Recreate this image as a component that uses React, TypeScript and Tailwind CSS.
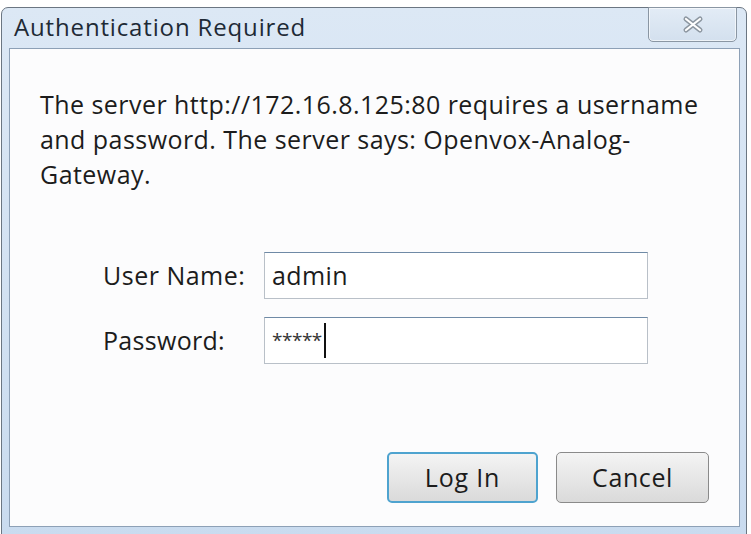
import React from "react";

const font = { fontFamily: '"Open Sans", "Noto Sans", sans-serif' };

export default function App() {
  return (
    <div className="w-[751px] h-[534px] overflow-hidden bg-white pt-[7px] pl-[1px]" style={font}>
      <div className="w-[746px] h-[540px] rounded-t-[7px] border border-[#6b7682] bg-gradient-to-b from-[#dce8f5] to-[#c9dbef] flex flex-col">
        <div className="h-[40px] flex items-start justify-between pl-[12px] pr-[9px] shrink-0">
          <span className="mt-[5px] text-[24px] leading-[28px] text-[#1e2a36] tracking-[0.85px]">Authentication Required</span>
          <div className="w-[89px] h-[35px] -mt-px rounded-b-[5px] border border-[#8a96a3] bg-gradient-to-b from-[#e3ecf6] to-[#d3e0ee] flex items-center justify-center shadow-[inset_0_0_0_1px_rgba(255,255,255,0.6)]">
            <svg width="24" height="19" viewBox="0 0 24 19">
              <path d="M5 4 L19 15 M19 4 L5 15" stroke="#8c96a0" strokeWidth="5" strokeLinecap="round" />
              <path d="M5 4 L19 15 M19 4 L5 15" stroke="#ffffff" strokeWidth="2.2" strokeLinecap="round" />
            </svg>
          </div>
        </div>
        <div className="mx-[7px] mr-[6px] h-[479px] shrink-0 border border-[#8da0b6] bg-[#fcfcfd] flex flex-col pl-[30px] pr-[20px] pt-[38px]">
          <p className="text-[25px] leading-[35px] text-[#1c1c1c] tracking-[0.45px] whitespace-nowrap">
            The server http://172.16.8.125:80 requires a username
            <br />
            and password. The server says: Openvox-Analog-
            <br />
            Gateway.
          </p>
          <div className="mt-[60px] ml-[63px] flex flex-col gap-[18px]">
            <div className="flex items-center">
              <span className="w-[161px] text-[25px] text-[#1c1c1c] tracking-[0.5px]">User Name:</span>
              <div className="w-[384px] h-[47px] border border-[#b9c0c8] border-t-[#6f8aa6] bg-white flex items-center pl-[7px] text-[25px] text-[#1c1c1c] tracking-[0.4px]">
                admin
              </div>
            </div>
            <div className="flex items-center">
              <span className="w-[161px] text-[25px] text-[#1c1c1c] tracking-[0.3px]">Password:</span>
              <div className="w-[384px] h-[47px] border border-[#b9c0c8] border-t-[#6f8aa6] bg-white flex items-center pl-[7px] text-[19px] text-[#333]">
                <span className="tracking-[-0.5px]">*****</span>
                <span className="ml-[2px] w-[2px] h-[35px] bg-[#111]" />
              </div>
            </div>
          </div>
          <div className="mt-[88px] mr-[10px] flex justify-end gap-[18px]">
            <div className="w-[151px] h-[51px] rounded-[5px] border-2 border-[#4ea3cf] bg-gradient-to-b from-[#f4f4f4] to-[#dadada] flex items-center justify-center text-[25px] text-[#1c1c1c] tracking-[0.8px]">
              Log In
            </div>
            <div className="w-[153px] h-[51px] rounded-[5px] border border-[#8a8a8a] bg-gradient-to-b from-[#f4f4f4] to-[#dadada] flex items-center justify-center text-[25px] text-[#1c1c1c] tracking-[0.6px]">
              Cancel
            </div>
          </div>
        </div>
      </div>
    </div>
  );
}
